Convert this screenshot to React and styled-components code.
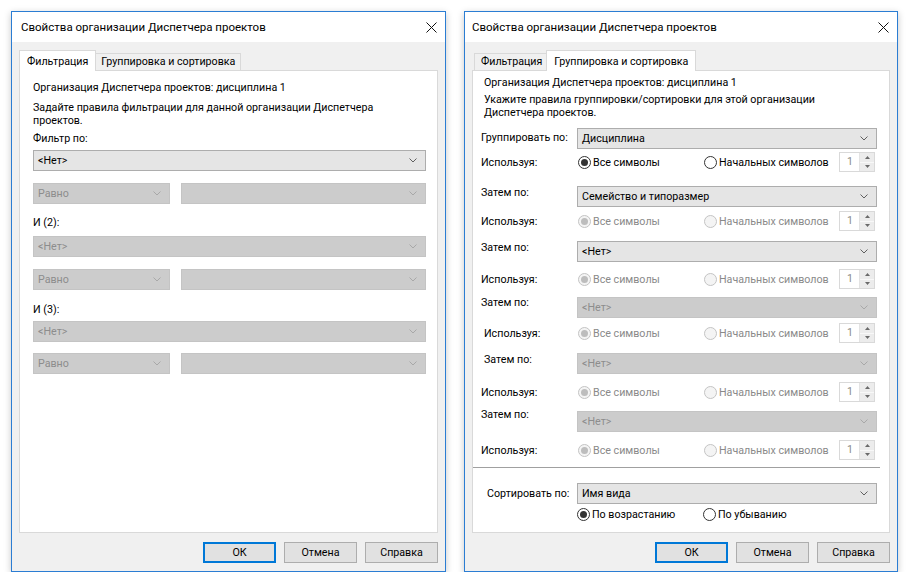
import styled, { createGlobalStyle } from "styled-components";

const GlobalStyle = createGlobalStyle`
  body {
    margin: 0;
    background: #ffffff;
    font-family: Roboto, "Noto Sans", sans-serif;
    font-size: 10.7px;
    color: #000;
  }
`;

const Page = styled.div`
  display: flex;
  gap: 18px;
  padding: 11px 0 0 11px;
`;

const Window = styled.div`
  width: ${(p) => p.$w}px;
  height: 561px;
  box-sizing: border-box;
  border: 1px solid #2b7dd3;
  background: #f0f0f0;
  display: flex;
  flex-direction: column;
  box-shadow: 0 2px 7px rgba(0, 0, 0, 0.22);
`;

const TitleBar = styled.div`
  height: 30px;
  flex: none;
  background: #fff;
  display: flex;
  align-items: center;
  justify-content: space-between;
  padding-left: ${(p) => p.$pl}px;
`;

const Title = styled.span`
  font-size: 11.5px;
  line-height: 15px;
  padding-top: 1px;
`;

const CloseBox = styled.div`
  width: 28px;
  height: 30px;
  display: flex;
  align-items: center;
  justify-content: center;
`;

const Body = styled.div`
  flex: 1;
  display: flex;
  flex-direction: column;
  padding: 8px 7px 8px 7px;
`;

const TabStrip = styled.div`
  display: flex;
  align-items: flex-end;
  height: 20px;
  padding-left: 2px;
  position: relative;
  z-index: 1;
`;

const Tab = styled.div`
  box-sizing: border-box;
  display: flex;
  align-items: flex-end;
  border: 1px solid #d9d9d9;
  border-bottom: none;
  line-height: 15px;
  height: ${(p) => (p.$active ? 21 : 17)}px;
  margin: ${(p) => (p.$active ? "0 -2px -1px -2px" : "0")};
  padding: ${(p) => (p.$active ? "0 7px 2px 7px" : "0 5px 1px 6px")};
  background: ${(p) => (p.$active ? "#fff" : "#f0f0f0")};
  position: relative;
  z-index: ${(p) => (p.$active ? 2 : 1)};
  white-space: nowrap;
`;

const Panel = styled.div`
  flex: 1;
  background: #fff;
  border: 1px solid #d9d9d9;
  padding: ${(p) => p.$pad};
  display: flex;
  flex-direction: column;
`;

const Text = styled.div`
  line-height: ${(p) => p.$lh || 15}px;
  margin-top: ${(p) => p.$mt || 0}px;
  margin-left: ${(p) => p.$indent || 0}px;
  white-space: nowrap;
`;

const ComboBox = styled.div`
  box-sizing: border-box;
  height: 21px;
  flex: ${(p) => (p.$w ? `0 0 ${p.$w}px` : "1")};
  margin-top: ${(p) => p.$mt || 0}px;
  display: flex;
  align-items: center;
  justify-content: space-between;
  padding: 0 8px 0 4px;
  border: 1px solid ${(p) => (p.$disabled ? "#c4c4c4" : "#adadad")};
  background: ${(p) => (p.$disabled ? "#cccccc" : "#e5e5e5")};
  color: ${(p) => (p.$disabled ? "#8d8d8d" : "#000")};
  white-space: nowrap;
`;

const ComboPair = styled.div`
  display: flex;
  gap: 11px;
  margin-top: ${(p) => p.$mt}px;
`;

const FormRow = styled.div`
  display: flex;
  align-items: ${(p) => (p.$center ? "center" : "flex-start")};
  margin-top: ${(p) => p.$mt}px;
  height: ${(p) => p.$h || 21}px;
`;

const RowLabel = styled.div`
  flex: none;
  width: ${(p) => 96 - (p.$indent || 0)}px;
  margin-left: ${(p) => p.$indent || 0}px;
  margin-top: ${(p) => p.$dy || 0}px;
  line-height: 15px;
  white-space: nowrap;
`;

const RadioItem = styled.div`
  flex: none;
  width: ${(p) => p.$w}px;
  margin-left: ${(p) => p.$ml || 0}px;
  display: flex;
  align-items: center;
  gap: 2px;
  line-height: 15px;
  color: ${(p) => (p.$disabled ? "#8a8a8a" : "#000")};
  white-space: nowrap;
`;

const RadioCircle = styled.span`
  box-sizing: border-box;
  flex: none;
  width: 13px;
  height: 13px;
  border-radius: 50%;
  border: 1px solid ${(p) => (p.$disabled ? "#c4c4c4" : "#333")};
  background: ${(p) => (p.$disabled ? "#f4f4f4" : "#fff")};
  display: flex;
  align-items: center;
  justify-content: center;

  &::after {
    content: "";
    display: ${(p) => (p.$checked ? "block" : "none")};
    width: 7px;
    height: 7px;
    border-radius: 50%;
    background: ${(p) => (p.$disabled ? "#bdbdbd" : "#333")};
  }
`;

const Spinner = styled.div`
  box-sizing: border-box;
  flex: none;
  width: 36px;
  height: 20px;
  border: 1px solid #d9d9d9;
  background: #fff;
  display: flex;
  color: #8a8a8a;
`;

const SpinValue = styled.span`
  flex: 1;
  line-height: 18px;
  padding-left: 7px;
`;

const SpinArrows = styled.div`
  width: 14px;
  display: flex;
  flex-direction: column;
  border-left: 1px solid #e3e3e3;
`;

const SpinHalf = styled.div`
  flex: 1;
  background: #ececec;
  display: flex;
  align-items: center;
  justify-content: center;
  border-top: ${(p) => (p.$lower ? "1px solid #f8f8f8" : "none")};
`;

const Separator = styled.div`
  height: 1px;
  background: #a0a0a0;
  margin: ${(p) => p.$mt}px -3px 0 -8px;
  box-shadow: 0 1px 0 #fff;
`;

const ButtonBar = styled.div`
  display: flex;
  justify-content: flex-end;
  gap: 8px;
  margin-top: 9px;
`;

const Button = styled.div`
  box-sizing: border-box;
  width: 73px;
  height: 21px;
  display: flex;
  align-items: center;
  justify-content: center;
  background: #e1e1e1;
  border: ${(p) => (p.$default ? "2px solid #0078d7" : "1px solid #adadad")};
`;

function CloseIcon() {
  return (
    <svg width="11" height="11" viewBox="0 0 11 11">
      <path d="M0.5 0.5 L10.5 10.5 M10.5 0.5 L0.5 10.5" stroke="#111" strokeWidth="1" fill="none" />
    </svg>
  );
}

function Chevron({ disabled }) {
  return (
    <svg width="8" height="5" viewBox="0 0 8 5">
      <polyline points="0.5,0.5 4,4 7.5,0.5" fill="none" stroke={disabled ? "#a8a8a8" : "#606060"} strokeWidth="1" />
    </svg>
  );
}

function Combo({ value, disabled, w, mt }) {
  return (
    <ComboBox $disabled={disabled} $w={w} $mt={mt}>
      <span>{value}</span>
      <Chevron disabled={disabled} />
    </ComboBox>
  );
}

function Radio({ label, checked, disabled, w, ml }) {
  return (
    <RadioItem $disabled={disabled} $w={w} $ml={ml}>
      <RadioCircle $checked={checked} $disabled={disabled} />
      <span>{label}</span>
    </RadioItem>
  );
}

function SpinBox() {
  return (
    <Spinner>
      <SpinValue>1</SpinValue>
      <SpinArrows>
        <SpinHalf>
          <svg width="5" height="3" viewBox="0 0 5 3">
            <polygon points="0,3 2.5,0 5,3" fill="#6a6a6a" />
          </svg>
        </SpinHalf>
        <SpinHalf $lower>
          <svg width="5" height="3" viewBox="0 0 5 3">
            <polygon points="0,0 5,0 2.5,3" fill="#6a6a6a" />
          </svg>
        </SpinHalf>
      </SpinArrows>
    </Spinner>
  );
}

function Dialog({ w, titlePad, active, panelPad, children }) {
  return (
    <Window $w={w}>
      <TitleBar $pl={titlePad}>
        <Title>Свойства организации Диспетчера проектов</Title>
        <CloseBox>
          <CloseIcon />
        </CloseBox>
      </TitleBar>
      <Body>
        <TabStrip>
          <Tab $active={active === 0}>Фильтрация</Tab>
          <Tab $active={active === 1}>Группировка и сортировка</Tab>
        </TabStrip>
        <Panel $pad={panelPad}>{children}</Panel>
        <ButtonBar>
          <Button $default>ОК</Button>
          <Button>Отмена</Button>
          <Button>Справка</Button>
        </ButtonBar>
      </Body>
    </Window>
  );
}

function FilterTab() {
  const groups = [
    { label: "Фильтр по:", lmt: 4, cmt: 4, pmt: 12, enabled: true },
    { label: "И (2):", lmt: 11, cmt: 6, pmt: 12 },
    { label: "И (3):", lmt: 12, cmt: 4, pmt: 11 },
  ];
  return (
    <>
      <Text $mt={9}>Организация Диспетчера проектов: дисциплина 1</Text>
      <Text $mt={6} $lh={13}>
        Задайте правила фильтрации для данной организации Диспетчера
        <br />
        проектов.
      </Text>
      {groups.map((g) => (
        <div key={g.label}>
          <Text $mt={g.lmt}>{g.label}</Text>
          <Combo value="<Нет>" disabled={!g.enabled} mt={g.cmt} />
          <ComboPair $mt={g.pmt}>
            <Combo value="Равно" disabled w={137} />
            <Combo value="" disabled />
          </ComboPair>
        </div>
      ))}
    </>
  );
}

const groupRows = [
  { type: "select", label: "Группировать по:", value: "Дисциплина", mt: 9, dy: 2 },
  { type: "using", enabled: true, mt: 3 },
  { type: "select", label: "Затем по:", value: "Семейство и типоразмер", mt: 14, dy: -1 },
  { type: "using", mt: 4 },
  { type: "select", label: "Затем по:", value: "<Нет>", mt: 10, dy: -1 },
  { type: "using", mt: 7 },
  { type: "select", label: "Затем по:", value: "<Нет>", disabled: true, mt: 8, dy: -2 },
  { type: "using", mt: 5, indent: 3 },
  { type: "select", label: "Затем по:", value: "<Нет>", disabled: true, mt: 10, dy: -1, indent: 3 },
  { type: "using", mt: 8 },
  { type: "select", label: "Затем по:", value: "<Нет>", disabled: true, mt: 9, dy: -4 },
  { type: "using", mt: 8 },
];

function GroupTab() {
  return (
    <>
      <Text $mt={4} $indent={3}>
        Организация Диспетчера проектов: дисциплина 1
      </Text>
      <Text $mt={3} $lh={13} $indent={3}>
        Укажите правила группировки/сортировки для этой организации
        <br />
        Диспетчера проектов.
      </Text>
      {groupRows.map((r, i) =>
        r.type === "select" ? (
          <FormRow key={i} $mt={r.mt}>
            <RowLabel $dy={r.dy} $indent={r.indent}>
              {r.label}
            </RowLabel>
            <Combo value={r.value} disabled={r.disabled} />
          </FormRow>
        ) : (
          <FormRow key={i} $mt={r.mt} $h={20} $center>
            <RowLabel $indent={r.indent} $dy={1}>
              Используя:
            </RowLabel>
            <Radio label="Все символы" checked disabled={!r.enabled} w={126} ml={1} />
            <Radio label="Начальных символов" disabled={!r.enabled} w={135} />
            <SpinBox />
          </FormRow>
        )
      )}
      <Separator $mt={7} />
      <FormRow $mt={15} $center>
        <RowLabel $indent={6}>Сортировать по:</RowLabel>
        <Combo value="Имя вида" />
      </FormRow>
      <FormRow $mt={3} $h={15} $center>
        <RowLabel />
        <Radio label="По возрастанию" checked w={126} />
        <Radio label="По убыванию" w={135} />
      </FormRow>
    </>
  );
}

export default function App() {
  return (
    <>
      <GlobalStyle />
      <Page>
        <Dialog w={435} titlePad={9} active={0} panelPad="0 11px 0 13px">
          <FilterTab />
        </Dialog>
        <Dialog w={434} titlePad={7} active={1} panelPad="0 12px 0 8px">
          <GroupTab />
        </Dialog>
      </Page>
    </>
  );
}
